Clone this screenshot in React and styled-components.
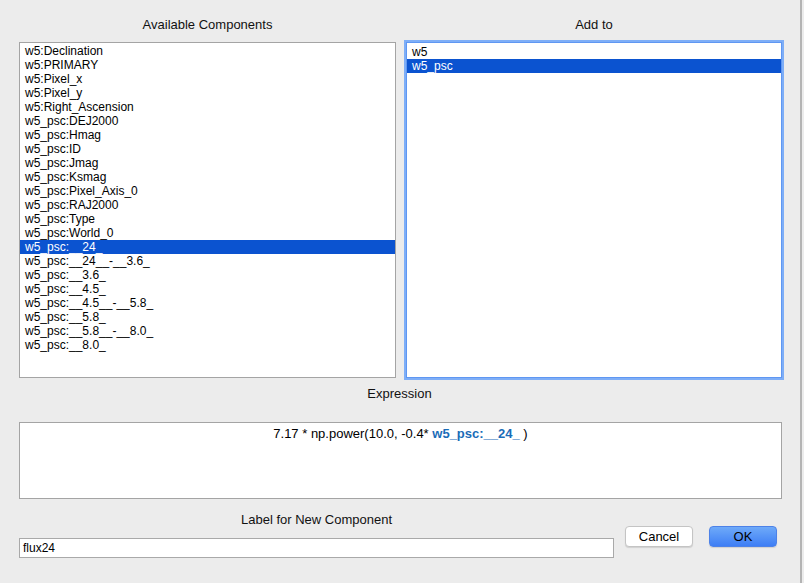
import React from "react";
import styled, { createGlobalStyle } from "styled-components";

const Global = createGlobalStyle`
  html, body { margin: 0; padding: 0; background: #ececec; }
  body { font-family: "Liberation Sans", Arial, sans-serif; color: #000; }
`;

const Window = styled.div`
  width: 802px;
  height: 583px;
  box-sizing: border-box;
  border-right: 2px solid #b4b4b4;
  padding: 16px 20px 0 19px;
  background: #ececec;
`;

const TopGrid = styled.div`
  display: grid;
  grid-template-columns: 377px 376px;
  column-gap: 10px;
`;

const Column = styled.div`
  display: flex;
  flex-direction: column;
`;

const Heading = styled.div`
  font-size: 13px;
  line-height: 18px;
  height: 18px;
  text-align: center;
  color: #111;
  margin-bottom: ${(p) => p.$gap ?? 8}px;
`;

const ListBox = styled.div`
  height: 336px;
  box-sizing: border-box;
  background: #fff;
  border: 1px solid ${(p) => (p.$focused ? "#5f97f2" : "#a4a4a4")};
  box-shadow: ${(p) => (p.$focused ? "0 0 0 2px #7eaef7" : "none")};
  padding-top: ${(p) => (p.$focused ? 2 : 1)}px;
  overflow: hidden;
`;

const Row = styled.div`
  height: 14px;
  line-height: 14px;
  font-size: 12px;
  padding-left: 5px;
  white-space: pre;
  background: ${(p) => (p.$selected ? "#0b53d0" : "transparent")};
  color: ${(p) => (p.$selected ? "#fff" : "#000")};
`;

const ExprHeading = styled(Heading)`
  margin-top: 7px;
  margin-bottom: 19px;
`;

const ExprBox = styled.div`
  width: 763px;
  height: 77px;
  box-sizing: border-box;
  background: #fff;
  border: 1px solid #a4a4a4;
  padding-top: 3px;
  font-size: 13px;
  line-height: 16px;
  text-align: center;
  white-space: pre;
`;

const Ref = styled.span`
  color: #1a6cb8;
  font-weight: bold;
`;

const BottomRow = styled.div`
  display: flex;
  margin-top: 12px;
`;

const LabelColumn = styled.div`
  display: flex;
  flex-direction: column;
  width: 595px;
`;

const TextInput = styled.div`
  height: 20px;
  box-sizing: border-box;
  background: #fff;
  border: 1px solid #a9a9a9;
  font-size: 12px;
  line-height: 18px;
  padding-left: 3px;
`;

const Buttons = styled.div`
  display: flex;
  gap: 16px;
  margin-left: 11px;
  margin-top: 15px;
  align-items: flex-start;
`;

const Button = styled.div`
  width: 68px;
  height: 21px;
  box-sizing: border-box;
  border-radius: 4px;
  font-size: 13px;
  line-height: 19px;
  text-align: center;
  color: #000;
  border: 1px solid ${(p) => (p.$primary ? "#4d82e8" : "#c4c4c4")};
  background: ${(p) =>
    p.$primary ? "linear-gradient(#6eaaf9, #3e7ef5)" : "#fff"};
  box-shadow: 0 1px 1px rgba(0, 0, 0, 0.12);
`;

const available = [
  "w5:Declination",
  "w5:PRIMARY",
  "w5:Pixel_x",
  "w5:Pixel_y",
  "w5:Right_Ascension",
  "w5_psc:DEJ2000",
  "w5_psc:Hmag",
  "w5_psc:ID",
  "w5_psc:Jmag",
  "w5_psc:Ksmag",
  "w5_psc:Pixel_Axis_0",
  "w5_psc:RAJ2000",
  "w5_psc:Type",
  "w5_psc:World_0",
  "w5_psc:__24_",
  "w5_psc:__24__-__3.6_",
  "w5_psc:__3.6_",
  "w5_psc:__4.5_",
  "w5_psc:__4.5__-__5.8_",
  "w5_psc:__5.8_",
  "w5_psc:__5.8__-__8.0_",
  "w5_psc:__8.0_",
];

const targets = ["w5", "w5_psc"];

export default function App() {
  return (
    <>
      <Global />
      <Window>
        <TopGrid>
          <Column>
            <Heading>Available Components</Heading>
            <ListBox>
              {available.map((t) => (
                <Row key={t} $selected={t === "w5_psc:__24_"}>
                  {t}
                </Row>
              ))}
            </ListBox>
          </Column>
          <Column>
            <Heading>Add to</Heading>
            <ListBox $focused>
              {targets.map((t) => (
                <Row key={t} $selected={t === "w5_psc"}>
                  {t}
                </Row>
              ))}
            </ListBox>
          </Column>
        </TopGrid>
        <ExprHeading>Expression</ExprHeading>
        <ExprBox>
          {"7.17 * np.power(10.0, -0.4* "}
          <Ref>w5_psc:__24_</Ref>
          {" )"}
        </ExprBox>
        <BottomRow>
          <LabelColumn>
            <Heading $gap={9}>Label for New Component</Heading>
            <TextInput>flux24</TextInput>
          </LabelColumn>
          <Buttons>
            <Button>Cancel</Button>
            <Button $primary>OK</Button>
          </Buttons>
        </BottomRow>
      </Window>
    </>
  );
}
